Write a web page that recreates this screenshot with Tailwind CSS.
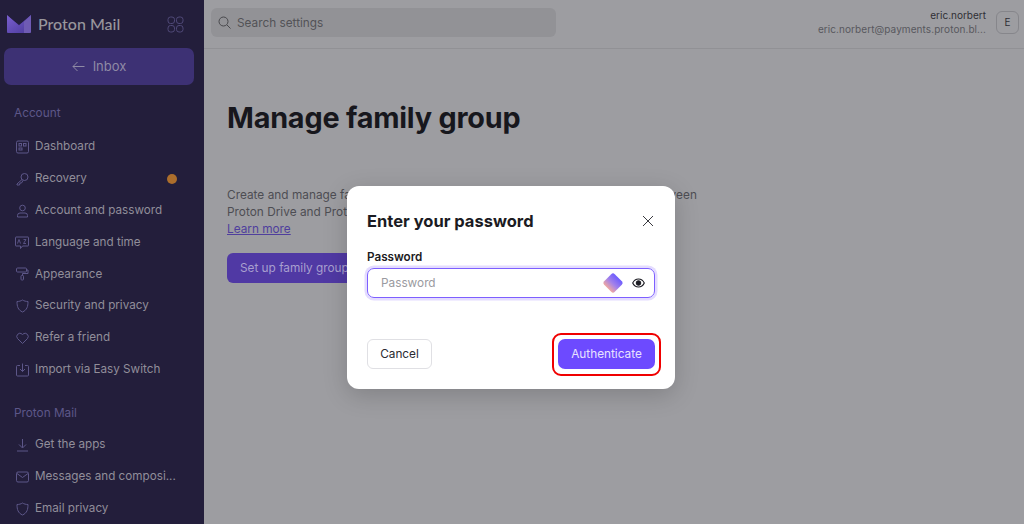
<!DOCTYPE html>
<html lang="en">
<head>
    <meta charset="UTF-8">
    <title>Manage family group</title>
    <script src="https://cdn.jsdelivr.net/npm/@tailwindcss/browser@4"></script>
</head>
<body class="w-[1024px] h-[524px] overflow-hidden bg-[#9d9da1] font-['Inter',sans-serif] relative">
<div class="flex h-[524px]">

    <!-- Sidebar -->
    <aside class="w-[204px] shrink-0 bg-[#231e3b] text-[#918e9a] flex flex-col">
        <div class="h-[48px] flex items-center pl-[7px] pr-[20px] justify-between shrink-0">
            <div class="flex items-center gap-[7px]">
                <svg width="24" height="20" viewBox="0 0 24 20">
                    <defs>
                        <linearGradient id="mailA" x1="0" y1="0" x2="1" y2="1"><stop offset="0" stop-color="#7a5fd0"/><stop offset="1" stop-color="#4b3a9a"/></linearGradient>
                    </defs>
                    <path d="M0 1.500 L0 17.500 Q0 19 1.500 19 L23 19 Q24 19 24 17.500 L24 1 L17 7 L12 11 Z" fill="#4a3a94"/>
                    <path d="M0 1 L12 11.500 L24 1 L24 2 L17 8 L17 19 L1.500 19 Q0 19 0 17.500 Z" fill="url(#mailA)"/>
                    <path d="M17 7.500 L24 1.500 L24 17.500 Q24 19 22.500 19 L17 19 Z" fill="#6f5bb4"/>
                </svg>
                <span class="font-['Lato',sans-serif] font-medium text-[16px] leading-none text-[#98969c]">Proton Mail</span>
            </div>
            <svg width="17" height="17" viewBox="0 0 17 17" fill="none" stroke="#4f4877" stroke-width="1">
                <rect x="1" y="1" width="6.500" height="6.500" rx="2.500"/>
                <rect x="9.500" y="1" width="6.500" height="6.500" rx="2.500"/>
                <rect x="1" y="9.500" width="6.500" height="6.500" rx="2.500"/>
                <rect x="9.500" y="9.500" width="6.500" height="6.500" rx="2.500"/>
            </svg>
        </div>

        <div class="px-[4px]">
            <div class="w-[190px] h-[37px] rounded-[7px] bg-[#3d3174] flex items-center justify-center gap-[8px] text-[13px] text-[#8f8aa5]">
                <svg width="13" height="11" viewBox="0 0 13 11" fill="none" stroke="#8f8aa5" stroke-width="1"><path d="M12.500 5.500H1M5.500 1 1 5.500l4.500 4.500"/></svg>
                <span>Inbox</span>
            </div>
        </div>

        <div class="mt-[20px] pl-[14px] text-[11.800px] leading-[16px] text-[#5d5789]">Account</div>

        <nav class="mt-[10px] pl-[16px] text-[11.700px]">
            <div class="h-[31.860px] flex items-center gap-[6px]">
                <svg class="shrink-0" width="13" height="14" viewBox="0 0 13 13" fill="none" stroke="#5d5789"><rect x=".5" y=".5" width="12" height="12" rx="1.500"/><rect x="3" y="3" width="2.500" height="2.500"/><rect x="7.500" y="3" width="2.500" height="2.500"/><rect x="3" y="7.500" width="3" height="2"/></svg>
                <span>Dashboard</span>
            </div>
            <div class="h-[31.860px] flex items-center gap-[6px]">
                <svg class="shrink-0" width="13" height="14" viewBox="0 0 13 13" fill="none" stroke="#5d5789"><circle cx="8.500" cy="4.500" r="3.500"/><path d="M6 7 1 11.500v1h2.500l.5-2h1.500L7 8"/></svg>
                <span>Recovery</span>
                <span class="ml-auto mr-[27px] w-[10px] h-[10px] rounded-full bg-[#ac6e2c]"></span>
            </div>
            <div class="h-[31.860px] flex items-center gap-[6px]">
                <svg class="shrink-0" width="13" height="14" viewBox="0 0 13 13" fill="none" stroke="#5d5789"><circle cx="6.500" cy="3.500" r="2.800"/><path d="M1.500 12.500v-1.500a2.500 2.500 0 0 1 2.500-2.500h5a2.500 2.500 0 0 1 2.500 2.500v1.500z"/></svg>
                <span>Account and password</span>
            </div>
            <div class="h-[31.860px] flex items-center gap-[5px] -ml-[1px]">
                <svg class="shrink-0" width="14" height="14" viewBox="0 0 14 13" fill="none" stroke="#5d5789"><path d="M1 .5h12a.5.5 0 0 1 .5.5v8a.5.5 0 0 1-.5.5H7.500L5.500 12V9.500H1A.5.500 0 0 1 .5 9V1A.5.500 0 0 1 1 .5Z"/><path d="M2.500 7 4 3l1.500 4M8.500 3H11L8.500 7H11" stroke-width=".9"/></svg>
                <span class="ml-[1px]">Language and time</span>
            </div>
            <div class="h-[31.860px] flex items-center gap-[6px]">
                <svg class="shrink-0" width="13" height="14" viewBox="0 0 13 13" fill="none" stroke="#5d5789"><rect x=".5" y=".5" width="10" height="4" rx="1"/><path d="M10.500 2.500h1.500v3.500H6.500v2"/><rect x="5" y="8" width="2.500" height="4.500" rx=".8"/></svg>
                <span>Appearance</span>
            </div>
            <div class="h-[31.860px] flex items-center gap-[6px]">
                <svg class="shrink-0" width="13" height="14" viewBox="0 0 13 14" fill="none" stroke="#5d5789"><path d="M6.500 1c1.500 1 3.500 1.500 5.500 1.500 0 5-1 8.500-5.500 10.500C2 11 1 7.500 1 2.500 3 2.500 5 2 6.500 1Z"/></svg>
                <span>Security and privacy</span>
            </div>
            <div class="h-[31.860px] flex items-center gap-[6px]">
                <svg class="shrink-0" width="13" height="14" viewBox="0 0 13 13" fill="none" stroke="#5d5789"><path d="M6.500 12 1.500 7A3.200 3.200 0 0 1 6 2.500l.5.5.5-.5A3.200 3.200 0 0 1 11.500 7Z"/></svg>
                <span>Refer a friend</span>
            </div>
            <div class="h-[31.860px] flex items-center gap-[6px]">
                <svg class="shrink-0" width="13" height="14" viewBox="0 0 13 14" fill="none" stroke="#5d5789"><path d="M4 2.500H1.500a1 1 0 0 0-1 1v8.500a1 1 0 0 0 1 1h10a1 1 0 0 0 1-1V3.500a1 1 0 0 0-1-1H9M6.500 .5v8M4 6l2.500 2.500L9 6"/></svg>
                <span>Import via Easy Switch</span>
            </div>
        </nav>

        <div class="mt-[19px] pl-[14px] text-[11.800px] leading-[16px] text-[#5d5789]">Proton Mail</div>

        <nav class="mt-[8px] pl-[16px] text-[11.700px]">
            <div class="h-[31.860px] flex items-center gap-[6px]">
                <svg class="shrink-0" width="13" height="14" viewBox="0 0 13 13" fill="none" stroke="#5d5789"><path d="M6.500 .5v8.500M3 6l3.500 3.500L10 6M1 12.500h11"/></svg>
                <span>Get the apps</span>
            </div>
            <div class="h-[31.860px] flex items-center gap-[6px]">
                <svg class="shrink-0" width="13" height="14" viewBox="0 0 13 11" fill="none" stroke="#5d5789"><rect x=".5" y=".5" width="12" height="10" rx="1.500"/><path d="M1 2l5.500 4L12 2"/></svg>
                <span class="whitespace-nowrap">Messages and composi...</span>
            </div>
            <div class="h-[31.860px] flex items-center gap-[6px]">
                <svg class="shrink-0" width="13" height="14" viewBox="0 0 13 14" fill="none" stroke="#5d5789"><path d="M6.500 1c1.500 1 3.500 1.500 5.500 1.500 0 5-1 8.500-5.500 10.500C2 11 1 7.500 1 2.500 3 2.500 5 2 6.500 1Z"/></svg>
                <span>Email privacy</span>
            </div>
        </nav>
    </aside>

    <!-- Main -->
    <main class="flex-1 flex flex-col min-w-0">
        <header class="h-[49px] shrink-0 border-b border-[#919195] flex items-center pl-[7px] pr-[5px]">
            <div class="w-[345px] h-[29px] -mt-[3px] rounded-[6px] bg-[#929296] flex items-center gap-[6px] px-[7px] text-[11.800px] text-[#535357]">
                <svg width="13" height="13" viewBox="0 0 13 13" fill="none" stroke="#48484c"><circle cx="5.500" cy="5.500" r="4.500"/><path d="m9 9 3.500 3.500"/></svg>
                <span class="mt-[2px]">Search settings</span>
            </div>
            <div class="ml-auto flex items-center gap-[10px] -mt-[4px]">
                <div class="text-right text-[10px] leading-[14px] -mt-[1px]">
                    <div class="text-[#2f2f35]">eric.norbert</div>
                    <div class="text-[#58585e] tracking-[0.008em]">eric.norbert@payments.proton.bl...</div>
                </div>
                <div class="w-[23px] h-[23px] rounded-[6px] border border-[#86868b] flex items-center justify-center text-[10px] text-[#2f2f35]">E</div>
            </div>
        </header>

        <section class="pl-[23px] pt-[49px]">
            <h1 class="text-[28.800px] leading-[40px] font-bold text-[#17171d] tracking-[-0.2px]">Manage family group</h1>
            <p class="mt-[49px] text-[11.800px] leading-[17px] text-[#4d4d53] whitespace-nowrap tracking-[0.03px]">Create and manage family accounts and share your Proton storage spaces between<br>Proton Drive and Proton Mail.</p>
            <a class="block text-[11.800px] leading-[17px] text-[#4f3f9d] underline">Learn more</a>
            <div class="mt-[15px] w-[140px] h-[30px] rounded-[6px] bg-[#5039a4] text-[11.800px] text-[#a89fcf] flex items-center pl-[13px] pt-[2px] whitespace-nowrap">Set up family group</div>
        </section>
    </main>
</div>

<!-- Modal -->
<div class="absolute left-[347px] top-[186px] w-[328px] h-[203px] bg-white rounded-[12px] shadow-[0_6px_24px_rgba(0,0,0,0.18)] px-[20px]">
    <div class="flex items-center justify-between pt-[24px]">
        <h2 class="text-[16.500px] leading-[22px] font-bold text-[#1b1b22]">Enter your password</h2>
        <svg class="mr-[1px]" width="12" height="12" viewBox="0 0 12 12" fill="none" stroke="#3a3a40"><path d="m1 1 10 10M11 1 1 11"/></svg>
    </div>
    <div class="mt-[17px] text-[11.700px] leading-[16px] font-semibold text-[#1b1b22]">Password</div>
    <div class="mt-[3px] h-[30px] w-[288px] rounded-[7px] border border-[#7d5fff] shadow-[0_0_0_2.500px_#e4dcff] flex items-center pl-[13px] pr-[9px]">
        <span class="mt-[2px] text-[11.800px] text-[#9a9aa0]">Password</span>
        <svg class="ml-auto" width="22" height="22" viewBox="0 0 22 22">
            <defs>
                <linearGradient id="gem" x1="0" y1="0" x2="0" y2="1"><stop offset="0" stop-color="#6d5cff"/><stop offset=".55" stop-color="#a583e8"/><stop offset="1" stop-color="#f0a8a0"/></linearGradient>
            </defs>
            <rect x="3.500" y="3.500" width="15" height="15" rx="2.500" transform="rotate(45 11 11)" fill="url(#gem)"/>
        </svg>
        <svg class="ml-[8px]" width="13" height="10" viewBox="0 0 13 10" fill="none" stroke="#1b1b22"><path d="M.7 5C2 2.300 4 1 6.500 1S11 2.300 12.300 5C11 7.700 9 9 6.500 9S2 7.700.7 5Z" stroke-width="1.100"/><circle cx="6.500" cy="5" r="2.300" fill="#1b1b22"/></svg>
    </div>
    <div class="mt-[41px] flex justify-between">
        <div class="w-[65px] h-[30px] pt-[2px] rounded-[6px] border border-[#e0e0e4] flex items-center justify-center text-[11.800px] text-[#2a2a31]">Cancel</div>
        <div class="relative w-[97px] h-[30px] pt-[2px] rounded-[7px] bg-[#6d4aff] flex items-center justify-center text-[11.800px] text-[#e8e2ff]">
            Authenticate
            <div class="absolute -left-[6px] -top-[6px] w-[109px] h-[43px] rounded-[9px] border-[2.500px] border-[#f00000]"></div>
        </div>
    </div>
</div>
</body>
</html>
